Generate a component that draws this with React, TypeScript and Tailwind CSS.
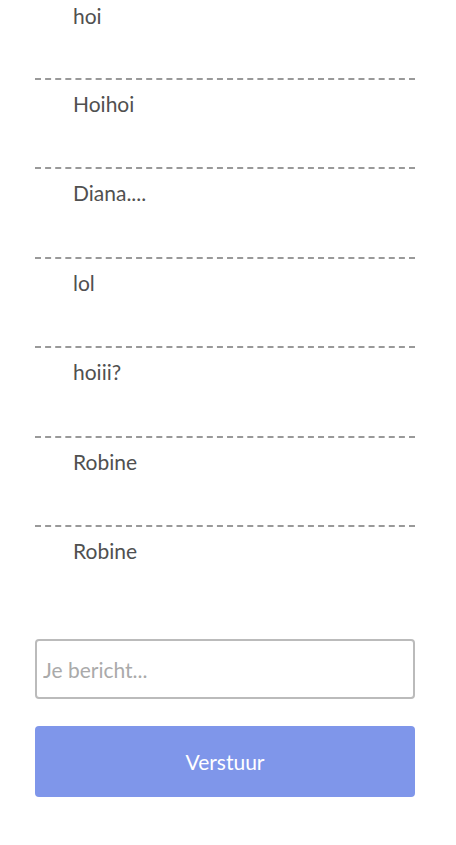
const messages = ['hoi', 'Hoihoi', 'Diana....', 'lol', 'hoiii?', 'Robine', 'Robine'];

export default function App() {
  return (
    <div className="min-h-screen bg-white font-['Lato',sans-serif] text-[#505050]">
      <div className="mx-[35px] w-[380px]">
        <ul>
          {messages.map((m, i) => (
            <li
              key={i}
              className={
                i === 0
                  ? 'border-b-2 border-dashed border-[#999] pl-[38px] pt-[1px] pb-[47px] text-[21px] leading-[30px]'
                  : i === messages.length - 1
                  ? 'pl-[38px] pt-[9px] pb-[48.4px] text-[21px] leading-[30px]'
                  : 'border-b-2 border-dashed border-[#999] pl-[38px] pt-[9px] pb-[48.4px] text-[21px] leading-[30px]'
              }
            >
              {m}
            </li>
          ))}
        </ul>
        <form className="mt-[25px] flex flex-col gap-[27px]" onSubmit={(e) => e.preventDefault()}>
          <input
            type="text"
            placeholder="Je bericht..."
            className="h-[60px] w-full rounded-[4px] border-2 border-[#bbb] px-[6px] text-[21px] text-[#505050] placeholder:text-[#aaa] outline-none"
          />
          <button
            type="submit"
            className="h-[71px] w-full rounded-[4px] bg-[#7f96ea] text-[21px] text-white"
          >
            Verstuur
          </button>
        </form>
      </div>
    </div>
  );
}
